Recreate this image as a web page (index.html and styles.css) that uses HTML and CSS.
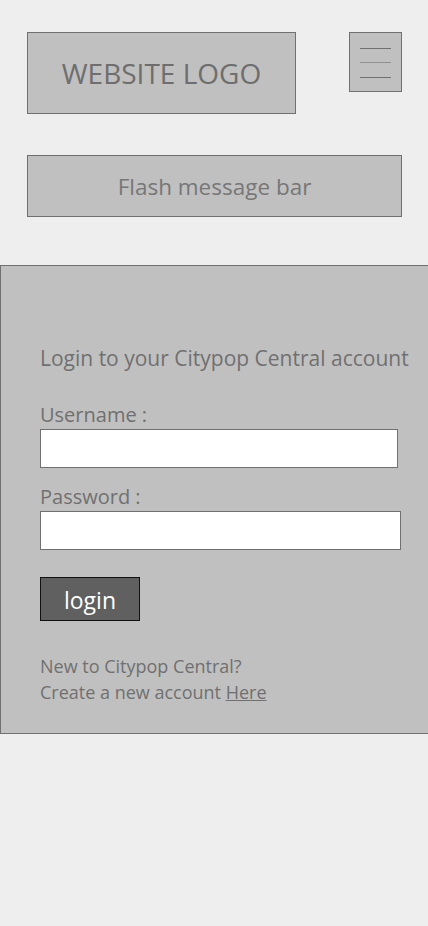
FILE: index.html
```html
<!DOCTYPE html>
<html>
<head>
<meta charset="utf-8">
<link rel="stylesheet" href="styles.css">
</head>
<body>
<header class="top">
  <div class="logo">WEBSITE LOGO</div>
  <div class="menu"><span class="bar"></span><span class="bar mid"></span><span class="bar"></span></div>
</header>
<div class="flash">Flash message bar</div>
<main class="panel">
  <h1 class="title">Login to your Citypop Central account</h1>
  <label class="label">Username :</label>
  <input class="field f1" type="text">
  <label class="label">Password :</label>
  <input class="field f2" type="password">
  <button class="btn">login</button>
  <p class="note">New to Citypop Central?<br>Create a new account <a href="#" class="link">Here</a></p>
</main>
</body>
</html>
```
FILE: styles.css
```css
* { box-sizing: border-box; }
html, body { margin: 0; padding: 0; }
body {
  background: #eeeeee;
  font-family: "Open Sans", "Noto Sans", sans-serif;
  color: #707070;
  width: 428px;
  height: 926px;
  overflow: hidden;
}
.top {
  display: flex;
  justify-content: space-between;
  align-items: flex-start;
  padding: 32px 26px 0 27px;
}
.logo {
  width: 269px;
  height: 82px;
  background: #c0c0c0;
  border: 1px solid #707070;
  display: flex;
  align-items: center;
  justify-content: center;
  font-size: 28px;
  color: #6e6e6e;
}
.menu {
  width: 53px;
  height: 60px;
  background: #c0c0c0;
  border: 1px solid #707070;
  display: flex;
  flex-direction: column;
  align-items: center;
  padding-top: 15px;
}
.bar { display: block; width: 31px; height: 1px; background: #707070; }
.bar.mid { background: #909090; margin: 13px 0 14px; }
.flash {
  margin: 41px 26px 0 27px;
  height: 62px;
  background: #c0c0c0;
  border: 1px solid #707070;
  display: flex;
  align-items: center;
  justify-content: center;
  font-size: 22.5px;
  color: #777777;
}
.panel {
  margin-top: 48px;
  background: #c0c0c0;
  border: 1px solid #707070;
  border-right: none;
  height: 469px;
  padding: 76px 0 0 39px;
  display: flex;
  flex-direction: column;
  align-items: flex-start;
}
.title {
  margin: 0 0 12px;
  font-weight: normal;
  font-size: 21px;
  line-height: 32px;
  white-space: nowrap;
}
.label {
  margin-top: 15px;
  font-size: 20px;
  line-height: 28px;
}
.field {
  display: block;
  height: 39px;
  background: #ffffff;
  border: 1px solid #707070;
  margin: 0;
  padding: 0;
}
.f1 { width: 358px; }
.f2 { width: 361px; }
.btn {
  margin-top: 27px;
  width: 100px;
  height: 44px;
  background: #606060;
  border: 1px solid #111111;
  color: #ffffff;
  font-family: inherit;
  font-size: 23px;
  padding: 3px 0 0;
  line-height: 1;
}
.note {
  margin: 32px 0 0;
  font-size: 18px;
  line-height: 26px;
}
.link { color: #707070; text-decoration: underline; }
```
